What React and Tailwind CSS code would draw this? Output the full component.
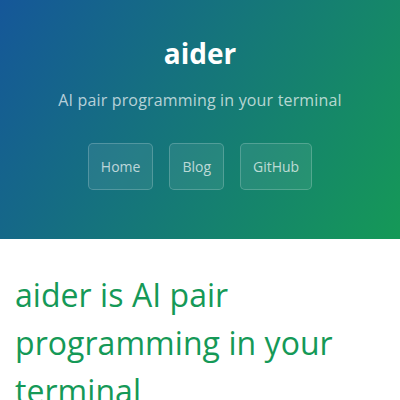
export default function App() {
  const btn =
    "inline-block px-3 py-3 text-sm leading-[21px] text-white/70 bg-white/[0.08] border border-white/20 rounded-[5px]";
  return (
    <div className="min-h-[400px] bg-white" style={{ fontFamily: '"Open Sans", sans-serif' }}>
      <header className="bg-[linear-gradient(120deg,#155799,#159957)] px-4 pt-8 pb-[49px] text-center text-white">
        <h1 className="text-[28px] leading-[42px] font-bold m-0">aider</h1>
        <p className="mt-[14px] text-base leading-6 tracking-[0.17px] text-white/70">AI pair programming in your terminal</p>
        <div className="mt-[31px] flex justify-center gap-4">
          <a className={btn}>Home</a>
          <a className={btn}>Blog</a>
          <a className={btn}>GitHub</a>
        </div>
      </header>
      <main className="pl-[15px] pr-4 pt-8">
        <h1 className="text-[32px] leading-[48px] tracking-[0.05px] font-normal text-[#159957]">
          aider is AI pair programming in your terminal
        </h1>
      </main>
    </div>
  );
}
